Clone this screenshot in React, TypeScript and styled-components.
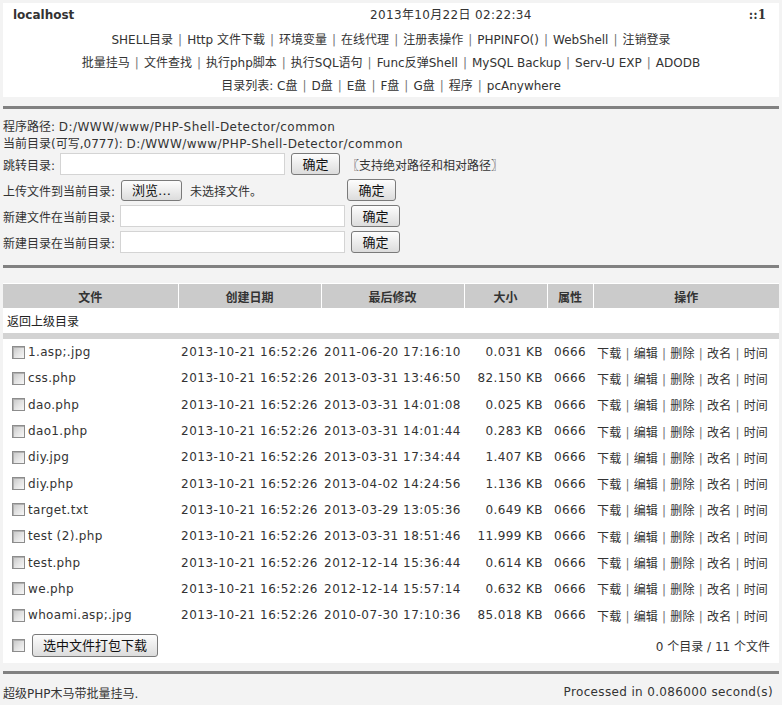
import React from "react";
import styled, { createGlobalStyle } from "styled-components";

const GlobalStyle = createGlobalStyle`
  html, body { margin: 0; padding: 0; }
  body {
    background: #f3f3f3;
    font-family: "DejaVu Sans", "Noto Sans CJK SC", sans-serif;
    font-size: 12px;
    color: #333;
  }
`;

const Page = styled.div`
  padding: 3px 3px 0 3px;
  width: 776px;
`;

const Header = styled.div`
  background: #fff;
  height: 94px;
  padding-top: 1px;
  box-sizing: border-box;
`;

const TopRow = styled.div`
  display: grid;
  grid-template-columns: 357px 1fr auto;
  padding: 0 13px 0 10px;
  line-height: 22px;
`;

const Host = styled.span`
  font-weight: bold;
  color: #333;
`;

const Clock = styled.span`
  color: #333;
  letter-spacing: 0.35px;
`;

const Ip = styled.span`
  font-weight: bold;
  color: #333;
  font-family: "DejaVu Serif", serif;
`;

const NavBlock = styled.div`
  margin-top: 3px;
  text-align: center;
  line-height: 23px;
`;

const NavLine = styled.div`
  display: flex;
  justify-content: center;
  align-items: center;
`;

const NavLink = styled.a`
  color: #333;
  text-decoration: none;
  cursor: pointer;
`;

const Sep = styled.span`
  color: #777;
  padding: 0 5px;
`;

const Rule = styled.div<{ $top: number }>`
  height: 3px;
  background: #818181;
  margin-top: ${(p) => p.$top}px;
`;

const FormSection = styled.div`
  padding: 10px 0 12px 0;
`;

const InfoLine = styled.div`
  line-height: 17px;
  color: #333;
`;

const Latin = styled.span<{ $ls: number }>`
  letter-spacing: ${(p) => p.$ls}px;
`;

const FormRow = styled.div`
  display: flex;
  align-items: center;
  height: 22px;
  margin-bottom: 4px;
  &:last-child { margin-bottom: 0; }
`;

const Label = styled.span<{ $w: number }>`
  width: ${(p) => p.$w}px;
  flex: none;
  color: #333;
`;

const TextInput = styled.input<{ $w: number }>`
  width: ${(p) => p.$w}px;
  height: 22px;
  box-sizing: border-box;
  border: 1px solid #d4d4d4;
  background: #fff;
  margin: 0;
  padding: 0 2px;
  flex: none;
`;

const Button = styled.button<{ $w: number; $ml?: number; $h?: number }>`
  width: ${(p) => p.$w}px;
  height: ${(p) => p.$h ?? 22}px;
  margin: 0 0 0 ${(p) => p.$ml ?? 0}px;
  padding: 0;
  flex: none;
  box-sizing: border-box;
  border: 1px solid #7a7a7a;
  border-radius: 3px;
  background: linear-gradient(#fdfdfd, #dcdcdc);
  font-family: "DejaVu Sans", "Noto Sans CJK SC", sans-serif;
  font-size: 13px;
  color: #111;
  line-height: 1;
`;

const Hint = styled.span<{ $ml: number }>`
  margin-left: ${(p) => p.$ml}px;
  color: #333;
`;

const TableWrap = styled.div`
  background: #fff;
  margin-top: 15px;
  padding-top: 1px;
`;

const FileTable = styled.table`
  width: 776px;
  table-layout: fixed;
  border-collapse: collapse;
  border-spacing: 0;
`;

const Th = styled.th`
  background: #cbcbcb;
  height: 24px;
  padding: 0;
  font-weight: bold;
  color: #333;
  text-align: center;
  border-right: 1px solid #fff;
  &:last-child { border-right: none; }
`;

const UpRow = styled.td`
  height: 25px;
  padding: 0 0 0 4px;
  color: #222;
`;

const Divider = styled.td`
  height: 6px;
  padding: 0;
  background: #d3d3d3;
`;

const Td = styled.td<{ $align?: string; $pl?: number; $pr?: number; $ls?: number }>`
  height: 26.3px;
  padding: 0 ${(p) => p.$pr ?? 0}px 0 ${(p) => p.$pl ?? 0}px;
  text-align: ${(p) => p.$align ?? "left"};
  letter-spacing: ${(p) => p.$ls ?? 0}px;
  color: #333;
  white-space: nowrap;
  overflow: hidden;
`;

const NameCell = styled.div`
  display: flex;
  align-items: center;
  padding-left: 9px;
  gap: 3px;
`;

const Check = styled.input.attrs({ type: "checkbox" })`
  appearance: none;
  -webkit-appearance: none;
  width: 13px;
  height: 13px;
  margin: 0;
  flex: none;
  box-sizing: border-box;
  border: 1px solid #8c8c8c;
  background: linear-gradient(135deg, #c6c6c6 0%, #e4e4e4 55%, #f7f7f7 100%);
  box-shadow: inset 1px 1px 0 #b0b0b0;
`;

const Ops = styled.span`
  color: #333;
  letter-spacing: 0.2px;
`;

const OpSep = styled.span`
  color: #777;
  padding: 0 4px;
`;

const FootCell = styled.td`
  height: 35px;
  padding: 0;
`;

const FootRow = styled.div`
  display: flex;
  align-items: center;
  padding-left: 9px;
`;

const Count = styled.div`
  text-align: right;
  padding-right: 9px;
  color: #333;
`;

const Footer = styled.div`
  display: flex;
  justify-content: space-between;
  align-items: center;
  height: 36px;
  padding: 0 6px 0 0;
  color: #333;
`;

const navLines: string[][] = [
  ["SHELL目录", "Http 文件下载", "环境变量", "在线代理", "注册表操作", "PHPINFO()", "WebShell", "注销登录"],
  ["批量挂马", "文件查找", "执行php脚本", "执行SQL语句", "Func反弹Shell", "MySQL Backup", "Serv-U EXP", "ADODB"],
];
const drives = ["C盘", "D盘", "E盘", "F盘", "G盘", "程序", "pcAnywhere"];

const files: [string, string, string, string][] = [
  ["1.asp;.jpg", "2013-10-21 16:52:26", "2011-06-20 17:16:10", "0.031 KB"],
  ["css.php", "2013-10-21 16:52:26", "2013-03-31 13:46:50", "82.150 KB"],
  ["dao.php", "2013-10-21 16:52:26", "2013-03-31 14:01:08", "0.025 KB"],
  ["dao1.php", "2013-10-21 16:52:26", "2013-03-31 14:01:44", "0.283 KB"],
  ["diy.jpg", "2013-10-21 16:52:26", "2013-03-31 17:34:44", "1.407 KB"],
  ["diy.php", "2013-10-21 16:52:26", "2013-04-02 14:24:56", "1.136 KB"],
  ["target.txt", "2013-10-21 16:52:26", "2013-03-29 13:05:36", "0.649 KB"],
  ["test (2).php", "2013-10-21 16:52:26", "2013-03-31 18:51:46", "11.999 KB"],
  ["test.php", "2013-10-21 16:52:26", "2012-12-14 15:36:44", "0.614 KB"],
  ["we.php", "2013-10-21 16:52:26", "2012-12-14 15:57:14", "0.632 KB"],
  ["whoami.asp;.jpg", "2013-10-21 16:52:26", "2010-07-30 17:10:36", "85.018 KB"],
];

const ops = ["下载", "编辑", "删除", "改名", "时间"];

function Joined({ items }: { items: string[] }) {
  return (
    <NavLine>
      {items.map((t, i) => (
        <React.Fragment key={t}>
          {i > 0 && <Sep>|</Sep>}
          <NavLink>{t}</NavLink>
        </React.Fragment>
      ))}
    </NavLine>
  );
}

export default function App() {
  return (
    <>
      <GlobalStyle />
      <Page>
        <Header>
          <TopRow>
            <Host>localhost</Host>
            <Clock>2013年10月22日 02:22:34</Clock>
            <Ip>::1</Ip>
          </TopRow>
          <NavBlock>
            <Joined items={navLines[0]} />
            <Joined items={navLines[1]} />
            <NavLine>
              <span>目录列表:&nbsp;</span>
              {drives.map((d, i) => (
                <React.Fragment key={d}>
                  {i > 0 && <Sep>|</Sep>}
                  <NavLink>{d}</NavLink>
                </React.Fragment>
              ))}
            </NavLine>
          </NavBlock>
        </Header>
        <Rule $top={9} />
        <FormSection>
          <InfoLine>
            程序路径: <Latin $ls={0.45}>D:/WWW/www/PHP-Shell-Detector/common</Latin>
          </InfoLine>
          <InfoLine>
            当前目录(可写,0777): <Latin $ls={0.45}>D:/WWW/www/PHP-Shell-Detector/common</Latin>
          </InfoLine>
          <FormRow>
            <Label $w={57}>跳转目录:</Label>
            <TextInput $w={225} />
            <Button $w={49} $ml={6}>确定</Button>
            <Hint $ml={7}>〖支持绝对路径和相对路径〗</Hint>
          </FormRow>
          <FormRow>
            <Label $w={118}>上传文件到当前目录:</Label>
            <Button $w={61} $h={21}>浏览…</Button>
            <Hint $ml={8}>未选择文件。</Hint>
            <Button $w={49} $ml={85}>确定</Button>
          </FormRow>
          <FormRow>
            <Label $w={117}>新建文件在当前目录:</Label>
            <TextInput $w={225} />
            <Button $w={49} $ml={6}>确定</Button>
          </FormRow>
          <FormRow>
            <Label $w={117}>新建目录在当前目录:</Label>
            <TextInput $w={225} />
            <Button $w={49} $ml={6}>确定</Button>
          </FormRow>
        </FormSection>
        <Rule $top={0} />
        <TableWrap>
          <FileTable>
            <colgroup>
              <col style={{ width: 175 }} />
              <col style={{ width: 143 }} />
              <col style={{ width: 143 }} />
              <col style={{ width: 83 }} />
              <col style={{ width: 46 }} />
              <col style={{ width: 186 }} />
            </colgroup>
            <thead>
              <tr>
                <Th>文件</Th>
                <Th>创建日期</Th>
                <Th>最后修改</Th>
                <Th>大小</Th>
                <Th>属性</Th>
                <Th>操作</Th>
              </tr>
            </thead>
            <tbody>
              <tr>
                <UpRow colSpan={6}>返回上级目录</UpRow>
              </tr>
              <tr>
                <Divider colSpan={6} />
              </tr>
              {files.map(([name, c, m, s]) => (
                <tr key={name}>
                  <Td $ls={0.35}>
                    <NameCell>
                      <Check />
                      <span>{name}</span>
                    </NameCell>
                  </Td>
                  <Td $pl={3} $ls={0.5}>{c}</Td>
                  <Td $pl={3} $ls={0.5}>{m}</Td>
                  <Td $align="right" $pr={4} $ls={0.4}>{s}</Td>
                  <Td $align="center" $ls={0.4}>0666</Td>
                  <Td $pl={4}>
                    <Ops>
                      {ops.map((o, i) => (
                        <React.Fragment key={o}>
                          {i > 0 && <OpSep>|</OpSep>}
                          {o}
                        </React.Fragment>
                      ))}
                    </Ops>
                  </Td>
                </tr>
              ))}
              <tr>
                <FootCell colSpan={3}>
                  <FootRow>
                    <Check />
                    <Button $w={126} $ml={7} $h={23}>选中文件打包下载</Button>
                  </FootRow>
                </FootCell>
                <FootCell colSpan={3}>
                  <Count>0 个目录 / 11 个文件</Count>
                </FootCell>
              </tr>
            </tbody>
          </FileTable>
        </TableWrap>
        <Rule $top={8} />
        <Footer>
          <span>超级PHP木马带批量挂马.</span>
          <Latin $ls={0.35}>Processed in 0.086000 second(s)</Latin>
        </Footer>
      </Page>
    </>
  );
}
